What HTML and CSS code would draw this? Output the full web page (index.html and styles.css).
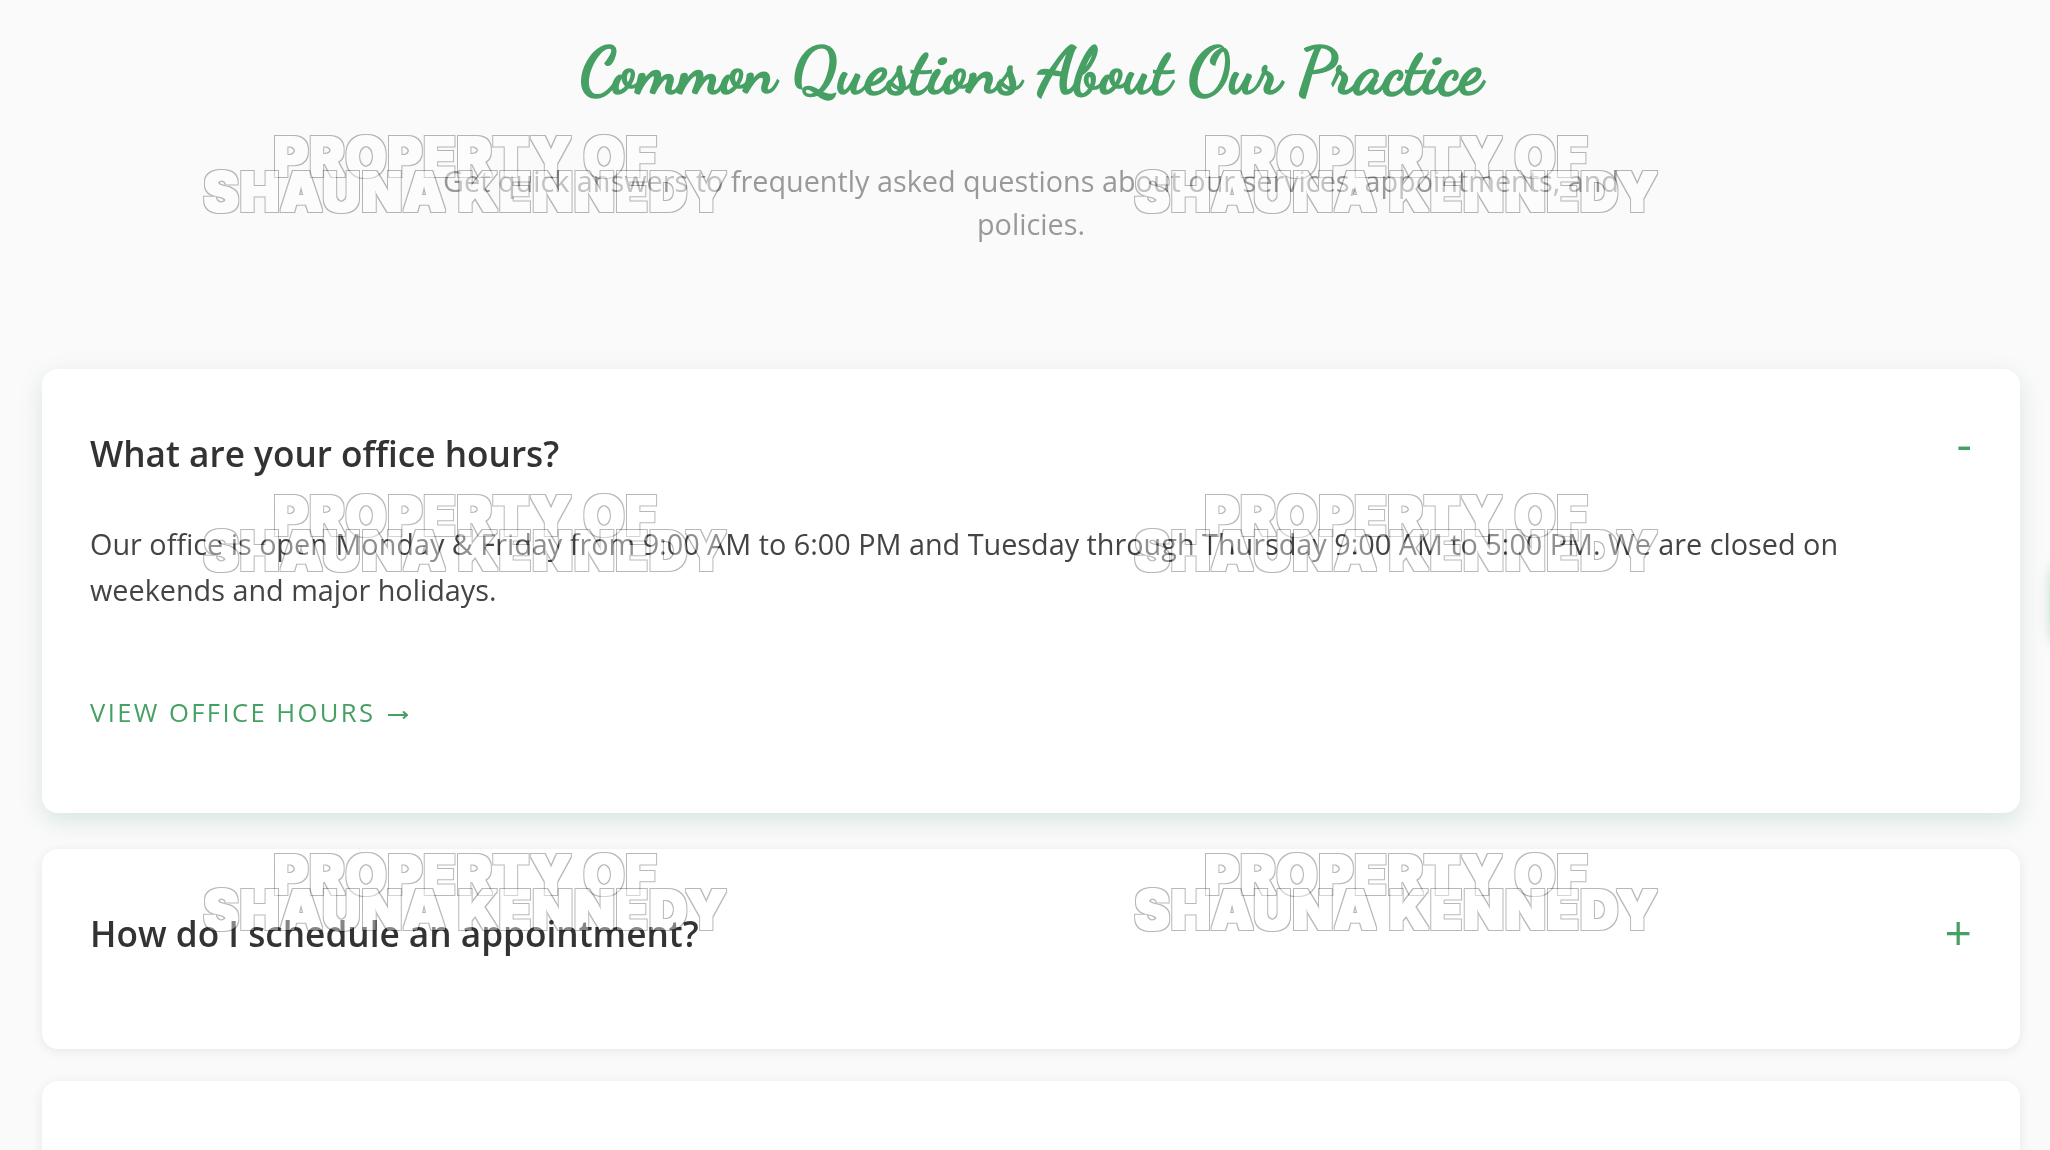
FILE: index.html
```html
<!DOCTYPE html>
<html lang="en">
<head>
<meta charset="utf-8">
<title>Common Questions About Our Practice</title>
<link rel="stylesheet" href="styles.css">
</head>
<body>
<svg class="defs" width="0" height="0" aria-hidden="true">
  <filter id="wm-ring" x="-5%" y="-20%" width="110%" height="140%">
    <feMorphology in="SourceAlpha" operator="dilate" radius="2.4" result="outer"/>
    <feMorphology in="SourceAlpha" operator="dilate" radius="1.1" result="inner"/>
    <feComposite in="outer" in2="inner" operator="out" result="ring"/>
    <feFlood flood-color="#b8b8b8"/>
    <feComposite in2="ring" operator="in"/>
  </filter>
  <filter id="wm-fill" x="-5%" y="-20%" width="110%" height="140%">
    <feMorphology in="SourceGraphic" operator="dilate" radius="1.2"/>
  </filter>
</svg>
<main class="faq">
  <header class="faq-head">
    <h1 class="faq-title">Common Questions About Our Practice</h1>
    <p class="faq-sub">Get quick answers to frequently asked questions about our services, appointments, and policies.</p>
  </header>
  <section class="faq-list">
    <article class="card card-open">
      <div class="card-row">
        <h2 class="card-q">What are your office hours?</h2>
        <span class="toggle toggle-minus">-</span>
      </div>
      <p class="card-a">Our office is open Monday &amp; Friday from 9:00 AM to 6:00 PM and Tuesday through Thursday 9:00 AM to 5:00 PM. We are closed on weekends and major holidays.</p>
      <a class="card-link" href="#">VIEW OFFICE HOURS
        <svg class="arrow" width="20" height="12" viewBox="0 0 20 12"><path d="M0 6H19M15 2.5L19 6L15 9.5" fill="none" stroke="currentColor" stroke-width="2"/></svg>
      </a>
    </article>
    <article class="card card-closed">
      <div class="card-row">
        <h2 class="card-q">How do I schedule an appointment?</h2>
        <span class="toggle">+</span>
      </div>
    </article>
    <article class="card card-closed"></article>
  </section>
</main>
<div class="edge-glow"></div>
<div class="wm-layer" aria-hidden="true">
  <div class="wm"><span class="wm-line" data-t="PROPERTY OF"><span class="wm-ring">PROPERTY OF</span></span><span class="wm-line" data-t="SHAUNA KENNEDY"><span class="wm-ring">SHAUNA KENNEDY</span></span></div>
  <div class="wm"><span class="wm-line" data-t="PROPERTY OF"><span class="wm-ring">PROPERTY OF</span></span><span class="wm-line" data-t="SHAUNA KENNEDY"><span class="wm-ring">SHAUNA KENNEDY</span></span></div>
  <div class="wm"><span class="wm-line" data-t="PROPERTY OF"><span class="wm-ring">PROPERTY OF</span></span><span class="wm-line" data-t="SHAUNA KENNEDY"><span class="wm-ring">SHAUNA KENNEDY</span></span></div>
  <div class="wm"><span class="wm-line" data-t="PROPERTY OF"><span class="wm-ring">PROPERTY OF</span></span><span class="wm-line" data-t="SHAUNA KENNEDY"><span class="wm-ring">SHAUNA KENNEDY</span></span></div>
  <div class="wm"><span class="wm-line" data-t="PROPERTY OF"><span class="wm-ring">PROPERTY OF</span></span><span class="wm-line" data-t="SHAUNA KENNEDY"><span class="wm-ring">SHAUNA KENNEDY</span></span></div>
  <div class="wm"><span class="wm-line" data-t="PROPERTY OF"><span class="wm-ring">PROPERTY OF</span></span><span class="wm-line" data-t="SHAUNA KENNEDY"><span class="wm-ring">SHAUNA KENNEDY</span></span></div>
</div>
</body>
</html>
```

FILE: styles.css
```css
* { box-sizing: border-box; }
html, body { margin: 0; height: 100%; overflow: hidden; }
body {
  background: #fafafa;
  font-family: "Open Sans", "Noto Sans", sans-serif;
  color: #333;
}
.defs { position: absolute; }
.faq { padding: 0 30px 0 42px; }
.faq-head { text-align: center; padding-top: 32px; height: 369px; }
.faq-title {
  margin: 0;
  font-family: "Dancing Script", "Pacifico", cursive;
  font-weight: 700;
  font-size: 64px;
  line-height: 80px;
  color: #46a064;
  -webkit-text-stroke: 1.7px #46a064;
  paint-order: stroke fill;
}
.faq-sub {
  margin: 47px auto 0;
  max-width: 1200px;
  font-size: 28.8px;
  line-height: 43px;
  color: #999;
}
.faq-list { display: flex; flex-direction: column; gap: 32px; }
.card {
  background: #fff;
  border-radius: 16px;
  padding: 56px 48px 0;
  height: 200px;
  box-shadow: 0 2px 12px rgba(0,0,0,.08);
}
.card-open {
  height: 444px;
  margin-bottom: 4px;
  box-shadow: 0 8px 24px rgba(46,125,80,.16);
}
.card-row { display: flex; justify-content: space-between; align-items: center; height: 56px; }
.card-q { margin: 0; font-size: 35.2px; line-height: 56px; font-weight: 600; color: #333; }
.toggle { font-size: 48px; line-height: 54px; align-self: flex-start; color: #46a064; font-weight: 400; }
.toggle-minus { line-height: 36px; }
.card-a { margin: 40px 0 0; font-size: 28.8px; line-height: 46px; color: #444; }
.card-link {
  display: inline-block;
  margin-top: 82px;
  font-size: 25.6px;
  font-weight: 500;
  line-height: 36px;
  letter-spacing: 2.4px;
  color: #46a064;
  text-decoration: none;
}
.arrow { margin-left: 3px; vertical-align: 1px; }
.edge-glow {
  position: absolute;
  right: -40px;
  top: 560px;
  width: 40px;
  height: 88px;
  border-radius: 20px;
  box-shadow: 0 0 12px rgba(70,160,100,.3);
}
.wm-layer {
  position: absolute;
  top: 0;
  left: 0;
  width: 2050px;
  height: 1150px;
  pointer-events: none;
  display: grid;
  grid-template-columns: repeat(2, 931px);
  grid-auto-rows: 359px;
  overflow: hidden;
}
.wm {
  text-align: center;
  font-family: Inter, "Liberation Sans", sans-serif;
  font-weight: 900;
  font-size: 53px;
  letter-spacing: 0.9px;
  line-height: 35px;
  padding-top: 140px;
}
.wm-line { display: block; position: relative; color: #000; }
.wm-line::before {
  content: attr(data-t);
  position: absolute;
  left: 0;
  right: 0;
  color: rgba(255,255,255,.4);
  filter: url(#wm-fill);
}
.wm-ring {
  display: block;
  position: relative;
  filter: url(#wm-ring);
  mix-blend-mode: multiply;
}
```
